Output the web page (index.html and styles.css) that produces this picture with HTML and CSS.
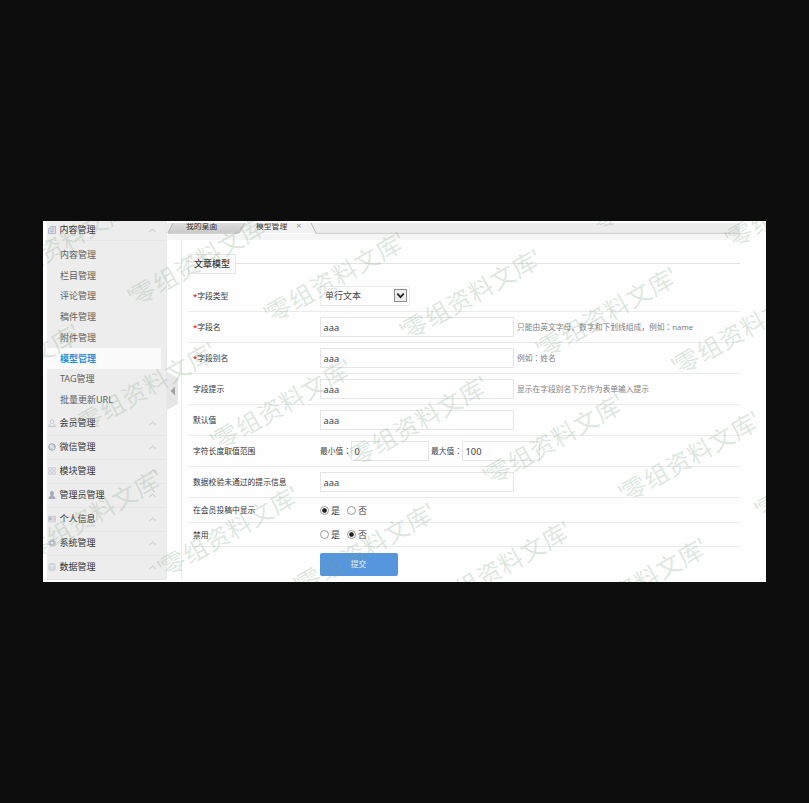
FILE: index.html
```
<!DOCTYPE html>
<html>
<head>
<meta charset="utf-8">
<title>模型管理</title>
<link rel="stylesheet" href="styles.css">
</head>
<body>
<div class="panel">
  <aside class="sidebar">
    <div class="group first"><svg class="icon" viewBox="0 0 8 8"><path d="M2.5 .5h5v7h-7v-5h2zM2 4h4M2 5.7h4M4 2h2" fill="#dfe1ee" stroke="#a8adc4" stroke-width=".8"/></svg><span>内容管理</span><i class="chev"></i></div>
    <nav class="subs">
      <a>内容管理</a><a>栏目管理</a><a>评论管理</a><a>稿件管理</a><a>附件管理</a><a class="current">模型管理</a><a>TAG管理</a><a>批量更新URL</a>
    </nav>
    <div class="group"><svg class="icon" viewBox="0 0 8 8"><path d="M4 .6C1.8.6 2.2 3.5 3 4.4 2.8 5.6.7 5.5.6 7.4h6.8C7.3 5.5 5.2 5.6 5 4.4 5.8 3.5 6.2.6 4 .6z" fill="#f0f1f3" stroke="#b3b7bf" stroke-width=".8"/></svg><span>会员管理</span><i class="chev"></i></div>
    <div class="group"><svg class="icon" viewBox="0 0 8 8"><circle cx="4" cy="4" r="3.3" fill="#ccd1da" stroke="#9ea5b1" stroke-width=".9"/><path d="M2 2.3l2 .2.8 1.7-1.6.3zM5 4.5l1.2.4L5 6.4z" fill="#f5f6f8"/></svg><span>微信管理</span><i class="chev"></i></div>
    <div class="group"><svg class="icon" viewBox="0 0 8 8"><path d="M.7.7h2.6v2.6H.7zM4.7.7h2.6v2.6H4.7zM.7 4.7h2.6v2.6H.7zM4.7 4.7h2.6v2.6H4.7z" fill="#eceef1" stroke="#bfc3ca" stroke-width=".7"/></svg><span>模块管理</span><i class="chev"></i></div>
    <div class="group"><svg class="icon" viewBox="0 0 8 8"><path d="M4 0C1.6 0 1.8 3.3 2.800 4.300 2.800 5.300.6 5.300.5 8h7C7.400 5.300 5.200 5.300 5.200 4.300 6.200 3.300 6.400 0 4 0z" fill="#a4abb8"/></svg><span>管理员管理</span><i class="chev"></i></div>
    <div class="group"><svg class="icon" viewBox="0 0 8 8"><path d="M.4 1.400h7.2v5.400H.4z" fill="#e6e8ec" stroke="#b8bdc5" stroke-width=".7"/><path d="M1.300 2.600h2v2.500h-2zM4.200 3h2.500M4.200 4.800h2.500" fill="#b3b9c4" stroke="#b3b9c4" stroke-width=".6"/></svg><span>个人信息</span><i class="chev"></i></div>
    <div class="group"><svg class="icon" viewBox="0 0 8 8"><circle cx="4" cy="4" r="2.900" fill="none" stroke="#b4bac5" stroke-width="1.800" stroke-dasharray="1.500 .78"/><circle cx="4" cy="4" r="1.900" fill="none" stroke="#b4bac5" stroke-width="1.200"/></svg><span>系统管理</span><i class="chev"></i></div>
    <div class="group"><svg class="icon" viewBox="0 0 8 8"><path d="M1 1.600C1 .4 7 .4 7 1.600v4.800C7 7.600 1 7.600 1 6.400z" fill="#d8dde1" stroke="#b5bdc4" stroke-width=".7"/><path d="M1 2.200c1 1 5 1 6 0" fill="none" stroke="#f7f8f9" stroke-width=".7"/></svg><span>数据管理</span><i class="chev"></i></div>
  </aside>

  <main class="main">
    <div class="tabs">
      <svg class="tabshape" viewBox="0 0 573 12" preserveAspectRatio="none">
        <defs><linearGradient id="tab" x1="0" y1="0" x2="0" y2="1"><stop offset="0" stop-color="#dedede"/><stop offset="1" stop-color="#c9c9c9"/></linearGradient></defs>
        <path d="M0 0H573V10H0z" fill="#ececed"/>
        <path d="M6 0H78L72 10H1z" fill="url(#tab)"/>
        <path d="M78 0H144L149 10H72z" fill="#f2f2f2"/>
        <path d="M6 0L1 10M78 0L72 10M144 0L149 10" stroke="#b5b5b5" stroke-width="1" fill="none"/>
        <path d="M1 10.500H72M148 10.500H573" stroke="#d3d3d3" stroke-width="1.600"/>
      </svg>
      <span class="tab one">我的桌面</span><span class="tab two">模型管理</span><span class="close">×</span>
    </div>
    <div class="strip"></div>
    <div class="body">
      <div class="legend"><b>文章模型</b></div>
      <form class="form">
        <div class="row"><label><em>*</em>字段类型</label><div class="select"><span>单行文本</span><i><svg viewBox="0 0 12 12"><path d="M2.500 4l3.500 3.800L9.500 4" fill="none" stroke="#222" stroke-width="1.900"/></svg></i></div></div>
        <div class="row"><label><em>*</em>字段名</label><div class="input">aaa</div><small>只能由英文字母、数字和下划线组成，例如<span class="mid">：</span>name</small></div>
        <div class="row"><label><em>*</em>字段别名</label><div class="input">aaa</div><small>例如<span class="mid">：</span>姓名</small></div>
        <div class="row"><label>字段提示</label><div class="input">aaa</div><small>显示在字段别名下方作为表单输入提示</small></div>
        <div class="row"><label>默认值</label><div class="input">aaa</div></div>
        <div class="row"><label>字符长度取值范围</label><span class="cap">最小值<span class="mid">：</span></span><div class="input num">0</div><span class="cap max">最大值<span class="mid">：</span></span><div class="input num">100</div></div>
        <div class="row"><label>数据校验未通过的提示信息</label><div class="input">aaa</div></div>
        <div class="row short"><label>在会员投稿中显示</label><i class="radio on"></i><span class="opt">是</span><i class="radio"></i><span class="opt">否</span></div>
        <div class="row short last"><label>禁用</label><i class="radio"></i><span class="opt">是</span><i class="radio on"></i><span class="opt">否</span></div>
        <div class="submit">提交</div>
      </form>
    </div>
  </main>

  <svg class="handle" viewBox="0 0 11 38"><path d="M0 0L11 6V32L0 38z" fill="#e6e6e6"/><path d="M8 14.500v9L3.500 19z" fill="#a2a2a2"/></svg>

  <svg class="marks" viewBox="43 221 723 361">
    <defs><text id="m" transform="rotate(-29.500)" text-anchor="middle" x="-1" y="10.500" dx="0 -3.500 0 0 0 0 0 -2">'零组资料文库'</text></defs>
    <use href="#m" x="660" y="184"/><use href="#m" x="796" y="201"/>
    <use href="#m" x="63" y="241"/><use href="#m" x="199" y="259"/><use href="#m" x="335" y="276"/><use href="#m" x="471" y="293"/><use href="#m" x="607" y="311"/><use href="#m" x="743" y="328"/>
    <use href="#m" x="10" y="368"/><use href="#m" x="146" y="386"/><use href="#m" x="282" y="403"/><use href="#m" x="418" y="420"/><use href="#m" x="554" y="438"/><use href="#m" x="690" y="455"/><use href="#m" x="826" y="472"/>
    <use href="#m" x="-43" y="496"/><use href="#m" x="93" y="513"/><use href="#m" x="229" y="530"/><use href="#m" x="365" y="547"/><use href="#m" x="501" y="565"/><use href="#m" x="637" y="582"/>
  </svg>
</div>
</body>
</html>
```
FILE: styles.css
```
* { box-sizing: border-box; }
body {
  margin: 0;
  height: 803px;
  padding: 221px 43px;
  background: #0d0d0d;
  font-family: "Noto Sans", "Noto Sans CJK SC", sans-serif;
  font-size: 9px;
  color: #444;
  overflow: hidden;
}
.panel {
  position: relative;
  display: flex;
  width: 723px;
  height: 361px;
  padding: 0 0 0 4px;
  background: #fefefe;
  overflow: hidden;
}
.sidebar {
  width: 120px;
  height: 358px;
  background: #ededed;
  border-right: 1px solid #e8e8e8;
}
.group {
  display: flex;
  align-items: center;
  height: 24px;
  padding: 0 11px 0 1px;
  border-bottom: 1px solid #e5e5e5;
  color: #333;
}
.group.first { height: 20px; padding-bottom: 1px; margin-bottom: 4px; }
.icon { width: 8px; height: 8px; margin-right: 3.500px; }
.group span { flex: 1; line-height: 12px; }
.chev {
  width: 5px;
  height: 5px;
  border: solid #c8c8c8;
  border-width: 1px 0 0 1px;
  transform: translateY(1px) scaleY(.8) rotate(45deg);
}
.subs { height: 166.500px; color: #606060; }
.subs a {
  display: block;
  width: 114px;
  height: 20.700px;
  padding-left: 13px;
  line-height: 20.700px;
}
.subs .current { background: #fbfbfb; color: #2490dc; font-weight: 700; line-height: 21.500px; }
.main { width: 573px; padding-top: 2px; }
.tabs { position: relative; height: 11px; width: 573px; overflow: hidden; display: flex; font-size: 7.800px; line-height: 12px; }
.tabshape { position: absolute; left: 0; top: 0; width: 573px; height: 12px; }
.tab { position: relative; margin-top: -3px; color: #333; white-space: nowrap; }
.one { margin-left: 19px; width: 70px; }
.two { width: 40px; }
.close { position: relative; margin-top: -3px; font-size: 9.500px; color: #999; }
.strip { height: 6px; background: #f5f5f5; }
.body { margin-left: 14px; border-left: 1px solid #ececec; height: 339px; padding-left: 6px; }
.legend { display: flex; align-items: center; height: 47px; }
.legend b {
  width: 48px;
  height: 20px;
  border: 1px solid #e6e6e6;
  background: #fafafa;
  text-align: center;
  font-weight: 500;
  line-height: 18px;
  color: #333;
  white-space: nowrap;
}
.legend::after { content: ""; flex: 1; height: 1px; background: #e4e4e4; }
.form { margin-top: -6px; }
.row {
  display: flex;
  align-items: center;
  height: 31px;
  border-bottom: 1px solid #ebebeb;
  padding-left: 5px;
  white-space: nowrap;
}
.row label { width: 127px; padding-bottom: 1px; font-size: 7.800px; color: #333; }
.row em { color: #e33; font-style: normal; font-weight: 700; }
.input {
  width: 194px;
  height: 20px;
  border: 1px solid #e6e6e6;
  background: #fefefe;
  padding-left: 2.500px;
  font-size: 9.300px;
  line-height: 20px;
}
.num { width: 78px; }
.cap { width: 31px; padding-bottom: 1px; font-size: 7.800px; }
.cap.max { margin-left: 2px; }
.mid { font-family: "Noto Sans CJK TC", sans-serif; }
small { margin-left: 3px; padding-bottom: 1px; font-size: 7.780px; color: #808080; }
.select {
  display: flex;
  align-items: center;
  justify-content: space-between;
  width: 90px;
  height: 20px;
  border: 1px solid #ebebeb;
  padding: 0 2px 1px 4px;
}
.select i { width: 13px; height: 13px; border: 1px solid #8d8d8d; background: #eee; }
.select svg { display: block; width: 11px; height: 11px; }
.short { height: 25px; }
.last { height: 24px; }
.radio { width: 9px; height: 9px; border: 1px solid #999; border-radius: 50%; background: #fff; }
.radio.on { background: radial-gradient(circle, #222 0 1.900px, #fff 2.700px); }
.opt { width: 16px; margin-left: 2px; }
.submit {
  width: 78px;
  height: 23px;
  margin: 6px 0 0 131.500px;
  border-radius: 2px;
  background: #5596de;
  color: #e8f2ff;
  font-size: 7.800px;
  line-height: 22px;
  text-align: center;
}
.handle { position: absolute; left: 124px; top: 151px; width: 11px; height: 38px; }
.marks { position: absolute; left: 0; top: 0; width: 723px; height: 361px; pointer-events: none; }
#m {
  font-family: "Noto Sans CJK SC", sans-serif;
  font-size: 24.200px;
  letter-spacing: .8px;
  fill: rgba(125, 165, 135, .26);
}
```
